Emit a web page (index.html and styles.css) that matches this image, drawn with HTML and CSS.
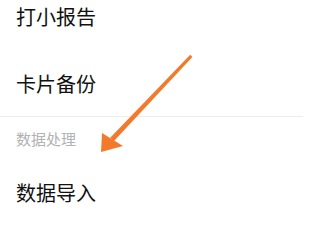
FILE: index.html
```html
<!DOCTYPE html>
<html lang="zh">
<head>
<meta charset="utf-8">
<link rel="stylesheet" href="styles.css">
</head>
<body>
<div class="page">
  <div class="list">
    <div class="item">打小报告</div>
    <div class="item item-last">卡片备份</div>
    <div class="section">数据处理</div>
    <div class="item">数据导入</div>
  </div>
  <svg class="arrow" width="303" height="219" viewBox="0 0 303 219" xmlns="http://www.w3.org/2000/svg">
    <polygon points="190.2,54.8 192.4,57 113.8,141.2 110.2,137.8" fill="#f37a2b"/>
    <polygon points="101,152 102,133 123,146" fill="#f37a2b"/>
  </svg>
</div>
</body>
</html>
```
FILE: styles.css
```css
html, body {
  margin: 0;
  padding: 0;
  background: #ffffff;
}
.page {
  position: relative;
  width: 303px;
  height: 219px;
  overflow: hidden;
  font-family: "Noto Sans CJK SC", "Noto Sans", sans-serif;
}
.list {
  display: flex;
  flex-direction: column;
  margin-top: -17px;
}
.item {
  box-sizing: border-box;
  height: 67px;
  display: flex;
  align-items: center;
  padding-left: 16px;
  font-size: 20px;
  color: #111111;
}
.item-last {
  border-bottom: 1px solid #ececec;
  height: 67px;
}
.section {
  box-sizing: border-box;
  height: 42px;
  display: flex;
  align-items: center;
  padding-left: 16px;
  font-size: 15px;
  color: #b2b2b2;
}
.arrow {
  position: absolute;
  left: 0;
  top: 0;
}
```
